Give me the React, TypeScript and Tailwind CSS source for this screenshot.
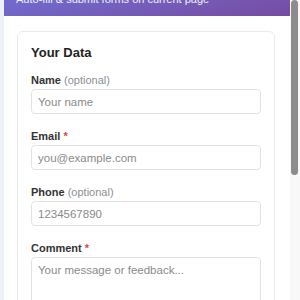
import { useLayoutEffect, useRef } from 'react';

const font = { fontFamily: '"Liberation Sans", Arial, sans-serif' };

function Field({
  label,
  required,
  placeholder,
  type = 'text',
}: {
  label: string;
  required?: boolean;
  placeholder: string;
  type?: string;
}) {
  return (
    <div>
      <label className="block text-[11px] leading-[14px] font-bold text-[#333] mb-[2px]">
        {label}{' '}
        {required ? (
          <span className="text-[#e53e3e]">*</span>
        ) : (
          <span className="font-normal text-[#8a8f98]">(optional)</span>
        )}
      </label>
      <input
        type={type}
        placeholder={placeholder}
        className="block w-full h-[25px] pl-[6px] pr-2 rounded-[4px] border border-[#e3e3e3] bg-white text-[11.5px] text-[#333] placeholder:text-[#8a8a8a] focus:outline-none"
      />
    </div>
  );
}

export default function App() {
  const scroller = useRef<HTMLDivElement>(null);

  useLayoutEffect(() => {
    if (scroller.current) scroller.current.scrollTop = 44;
  }, []);

  return (
    <div style={font} className="flex h-[300px] w-[300px] bg-[#eef2f7]">
      <div
        ref={scroller}
        className="flex-1 overflow-y-auto [scrollbar-width:none] [&::-webkit-scrollbar]:hidden"
      >
        <div className="ml-[4px] w-[286px] min-h-[590px] bg-white">
          <header className="bg-gradient-to-br from-[#667eea] to-[#764ba2] px-3 pt-3 pb-[10px] text-white">
            <h1 className="text-base leading-5 font-bold">Form Auto Filler</h1>
            <p className="mt-1 text-[11px] leading-[14px] text-white/90">
              Auto-fill &amp; submit forms on current page
            </p>
          </header>

          <div className="pl-[13px] pr-[15px] pt-[15px] pb-4">
            <section className="rounded-[6px] border border-[#ebebeb] bg-white px-[13px] pt-[13px] pb-[13px]">
              <h2 className="text-[13px] leading-4 font-bold text-[#222] mb-3">Your Data</h2>
              <div className="flex flex-col gap-[15px]">
                <Field label="Name" placeholder="Your name" />
                <Field label="Email" required type="email" placeholder="you@example.com" />
                <Field label="Phone" type="tel" placeholder="1234567890" />
                <div>
                  <label className="block text-[11px] leading-[14px] font-bold text-[#333] mb-[2px]">
                    Comment <span className="text-[#e53e3e]">*</span>
                  </label>
                  <textarea
                    rows={4}
                    placeholder="Your message or feedback..."
                    className="block w-full h-[70px] resize-none pl-[6px] pr-2 py-[5px] rounded-[4px] border border-[#e3e3e3] bg-white text-[11.5px] leading-[15px] text-[#333] placeholder:text-[#8a8a8a] focus:outline-none"
                  />
                </div>
              </div>
              <button className="mt-3 w-full h-8 rounded-[6px] bg-[#edf0f7] text-[12px] font-bold text-[#4a5568]">
                Save Data
              </button>
            </section>

            <div className="mt-3 flex flex-col gap-2">
              <button className="w-full h-8 rounded-[6px] bg-gradient-to-br from-[#667eea] to-[#764ba2] text-[12px] font-bold text-white">
                Fill Form
              </button>
              <button className="w-full h-8 rounded-[6px] bg-[#48bb78] text-[12px] font-bold text-white">
                Fill &amp; Submit
              </button>
            </div>
          </div>
        </div>
      </div>

      {/* scrollbar track */}
      <div className="w-[10px] shrink-0 bg-[#f8f8f8] pl-[1px]">
        <div className="h-[175px] w-[7px] rounded-full bg-[#8c8c8c]" />
      </div>
    </div>
  );
}
